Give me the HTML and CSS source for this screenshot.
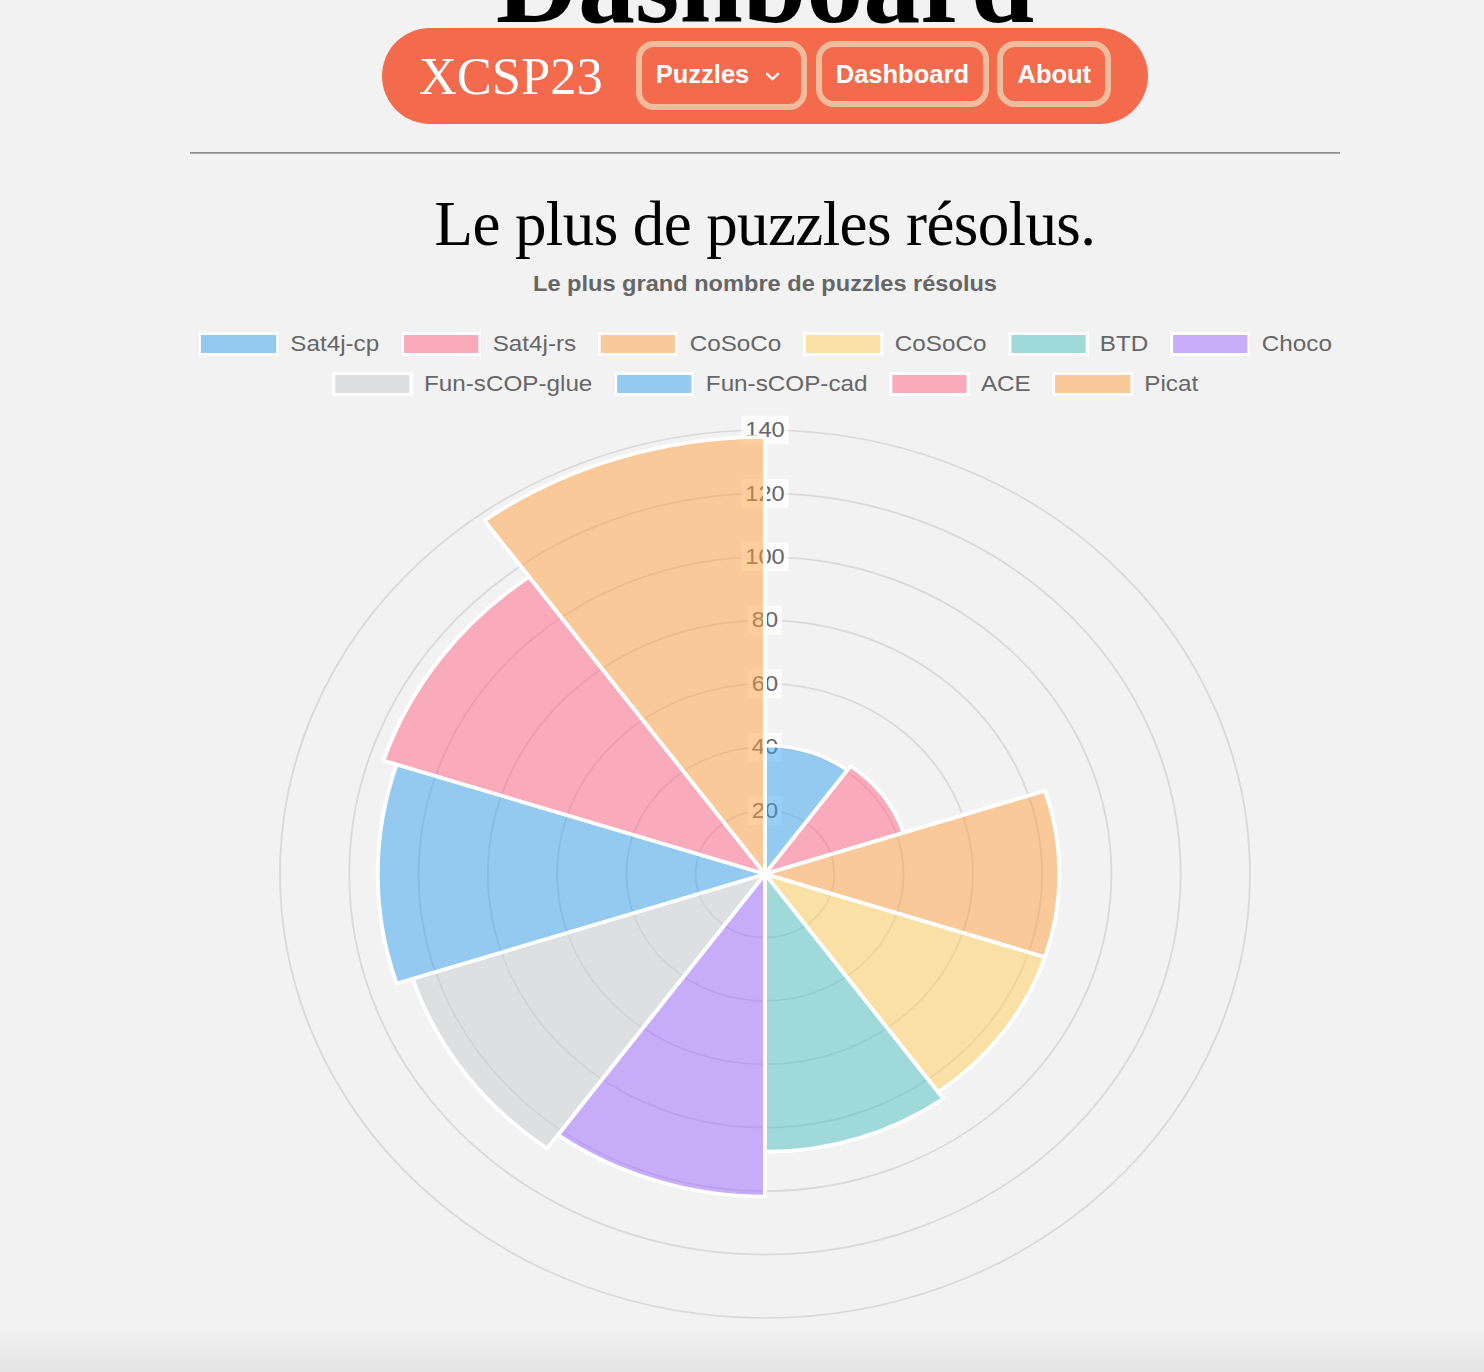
FILE: index.html
```html
<!DOCTYPE html>
<html lang="fr">
<head>
<meta charset="utf-8">
<title>Dashboard</title>
<link rel="stylesheet" href="styles.css">
</head>
<body>
<div class="page">
  <h1 class="site-title">Dashboard</h1>

  <nav class="topnav">
    <a class="brand" href="#">XCSP23</a>
    <ul class="nav-links">
      <li><a class="nav-btn nav-btn--dropdown" href="#">Puzzles <svg class="chev" viewBox="0 0 15 9" width="15" height="9"><polyline points="2,1.8 7.5,7.2 13,1.8"/></svg></a></li>
      <li><a class="nav-btn" href="#">Dashboard</a></li>
      <li><a class="nav-btn" href="#">About</a></li>
    </ul>
  </nav>

  <hr class="divider">

  <section class="chart-section">
    <h2 class="chart-heading">Le plus de puzzles résolus.</h2>

    <div class="chart-canvas">
      <div class="chart-title">Le plus grand nombre de puzzles résolus</div>

      <ul class="legend">
        <li class="legend-item"><span class="swatch c-blue"></span>Sat4j-cp</li>
        <li class="legend-item"><span class="swatch c-pink"></span>Sat4j-rs</li>
        <li class="legend-item"><span class="swatch c-orange"></span>CoSoCo</li>
        <li class="legend-item"><span class="swatch c-yellow"></span>CoSoCo</li>
        <li class="legend-item"><span class="swatch c-teal"></span>BTD</li>
        <li class="legend-item"><span class="swatch c-purple"></span>Choco</li>
        <li class="legend-item"><span class="swatch c-grey"></span>Fun-sCOP-glue</li>
        <li class="legend-item"><span class="swatch c-blue"></span>Fun-sCOP-cad</li>
        <li class="legend-item"><span class="swatch c-pink"></span>ACE</li>
        <li class="legend-item"><span class="swatch c-orange"></span>Picat</li>
      </ul>

      <svg class="polar" width="1052.8" height="925" viewBox="0 0 1052.8 925">
        <g class="grid">
          <circle cx="526.4" cy="474" r="63.43"/>
          <circle cx="526.4" cy="474" r="126.86"/>
          <circle cx="526.4" cy="474" r="190.29"/>
          <circle cx="526.4" cy="474" r="253.71"/>
          <circle cx="526.4" cy="474" r="317.14"/>
          <circle cx="526.4" cy="474" r="380.57"/>
          <circle cx="526.4" cy="474" r="444"/>
        </g>
        <g class="tick-bg">
          <rect x="510.8" y="396.17" width="31.2" height="28.8"/>
          <rect x="510.8" y="332.74" width="31.2" height="28.8"/>
          <rect x="510.8" y="269.31" width="31.2" height="28.8"/>
          <rect x="510.8" y="205.89" width="31.2" height="28.8"/>
          <rect x="504.8" y="142.46" width="43.2" height="28.8"/>
          <rect x="504.8" y="79.03" width="43.2" height="28.8"/>
          <rect x="504.8" y="15.6" width="43.2" height="28.8"/>
        </g>
        <g class="ticks">
          <text x="526.4" y="410.57">20</text>
          <text x="526.4" y="347.14">40</text>
          <text x="526.4" y="283.71">60</text>
          <text x="526.4" y="220.29">80</text>
          <text x="526.4" y="156.86">100</text>
          <text x="526.4" y="93.43">120</text>
          <text x="526.4" y="30">140</text>
        </g>
        <g class="slices">
          <path class="c-blue" d="M526.4,474 L526.4,345.56 A128.44,128.44 0 0 1 601.89,370.09 Z"/>
          <path class="c-pink" d="M526.4,474 L604.88,365.98 A133.52,133.52 0 0 1 653.39,432.74 Z"/>
          <path class="c-orange" d="M526.4,474 L782.78,390.70 A269.57,269.57 0 0 1 782.78,557.30 Z"/>
          <path class="c-yellow" d="M526.4,474 L782.78,557.30 A269.57,269.57 0 0 1 684.85,692.09 Z"/>
          <path class="c-teal" d="M526.4,474 L689.70,698.76 A277.82,277.82 0 0 1 526.4,751.82 Z"/>
          <path class="c-purple" d="M526.4,474 L526.4,796.53 A322.53,322.53 0 0 1 336.82,734.93 Z"/>
          <path class="c-grey" d="M526.4,474 L326.94,748.53 A339.34,339.34 0 0 1 203.67,578.86 Z"/>
          <path class="c-blue" d="M526.4,474 L189.18,583.57 A354.57,354.57 0 0 1 189.18,364.43 Z"/>
          <path class="c-pink" d="M526.4,474 L177.12,360.51 A367.25,367.25 0 0 1 310.54,176.89 Z"/>
          <path class="c-orange" d="M526.4,474 L269.52,120.44 A437.03,437.03 0 0 1 526.4,36.97 Z"/>
        </g>
      </svg>
    </div>
  </section>
</div>
<div class="bottom-shade"></div>
</body>
</html>
```

FILE: styles.css
```css
html, body {
  margin: 0;
  padding: 0;
}

body {
  background: #f2f2f2;
  font-family: "Liberation Sans", Arial, sans-serif;
  overflow: hidden;
}

.page {
  width: 1150px;
  margin-left: 190px;
}

.site-title {
  margin: -56.5px 0 0;
  font-family: "Liberation Serif", "Times New Roman", serif;
  font-weight: 700;
  font-size: 114px;
  line-height: 80px;
  text-align: center;
  color: #000;
}

/* ---------- navigation pill ---------- */
.topnav {
  display: flex;
  align-items: flex-start;
  width: fit-content;
  height: 96px;
  box-sizing: border-box;
  margin: 4.5px auto 0;
  padding: 0 37px;
  border-radius: 48px;
  background: #f36a4c;
}

.brand {
  align-self: center;
  margin-right: 33px;
  font-family: "Liberation Serif", "Times New Roman", serif;
  font-size: 52.5px;
  line-height: 50px;
  color: #fff;
  text-decoration: none;
}

.nav-links {
  display: flex;
  gap: 8.5px;
  margin: 13px 0 0;
  padding: 0;
  list-style: none;
}

.nav-btn {
  display: flex;
  align-items: center;
  padding: 12px 14px;
  border: 6px solid #f0bc9c;
  border-radius: 18px;
  font-family: "Liberation Sans", Arial, sans-serif;
  font-weight: 700;
  font-size: 25.5px;
  line-height: 30px;
  color: #fff;
  text-decoration: none;
}

.nav-btn--dropdown {
  padding: 12px 21px 15px 14px;
  gap: 16px;
}

.chev {
  margin-top: 5px;
}

.chev polyline {
  fill: none;
  stroke: #fff;
  stroke-width: 2.4;
  stroke-linecap: round;
  stroke-linejoin: round;
}

/* ---------- divider ---------- */
.divider {
  height: 0;
  margin: 28px 0 0;
  border: 0;
  border-top: 1px solid #8f8f8f;
  border-bottom: 1px solid #a8a8a8;
}

/* ---------- chart section ---------- */
.chart-heading {
  margin: 32px 0 0;
  font-family: "Liberation Serif", "Times New Roman", serif;
  font-weight: 400;
  font-size: 63px;
  line-height: 76px;
  letter-spacing: -0.6px;
  text-align: center;
  color: #000;
}

.chart-canvas {
  width: 1052.8px;
  margin-top: 9px;
  transform: scaleX(1.0923);
  transform-origin: 0 0;
}

.chart-title {
  font-weight: 700;
  font-size: 21.6px;
  line-height: 26px;
  text-align: center;
  color: #666;
}

.legend {
  display: flex;
  flex-wrap: wrap;
  justify-content: center;
  column-gap: 19.5px;
  row-gap: 14.8px;
  margin: 34px 0 0;
  padding: 0;
  list-style: none;
}

.legend-item {
  display: flex;
  align-items: center;
  gap: 10px;
  font-size: 22.2px;
  line-height: 25.2px;
  color: #666;
}

.swatch {
  width: 68.4px;
  height: 18px;
  border: 3.6px solid #fff;
}

.swatch.c-blue { background: rgba(54, 162, 235, 0.5); }
.swatch.c-pink { background: rgba(255, 99, 132, 0.5); }
.swatch.c-orange { background: rgba(255, 159, 64, 0.5); }
.swatch.c-yellow { background: rgba(255, 205, 86, 0.5); }
.swatch.c-teal { background: rgba(75, 192, 192, 0.5); }
.swatch.c-purple { background: rgba(153, 102, 255, 0.5); }
.swatch.c-grey { background: rgba(201, 203, 207, 0.5); }

.polar {
  display: block;
  margin-top: 3.8px;
}

.grid circle {
  fill: none;
  stroke: rgba(0, 0, 0, 0.1);
  stroke-width: 1.7;
}

.tick-bg rect {
  fill: rgba(255, 255, 255, 0.75);
}

.ticks text {
  font-family: "Liberation Sans", Arial, sans-serif;
  font-size: 21.6px;
  fill: #666;
  text-anchor: middle;
  dominant-baseline: central;
}

.slices path {
  stroke: #fff;
  stroke-width: 3.6;
  stroke-linejoin: bevel;
}

.slices .c-blue { fill: rgba(54, 162, 235, 0.5); }
.slices .c-pink { fill: rgba(255, 99, 132, 0.5); }
.slices .c-orange { fill: rgba(255, 159, 64, 0.5); }
.slices .c-yellow { fill: rgba(255, 205, 86, 0.5); }
.slices .c-teal { fill: rgba(75, 192, 192, 0.5); }
.slices .c-purple { fill: rgba(153, 102, 255, 0.5); }
.slices .c-grey { fill: rgba(201, 203, 207, 0.5); }

/* viewport bottom shading */
.bottom-shade {
  position: fixed;
  left: 0;
  right: 0;
  bottom: 0;
  height: 42px;
  background: linear-gradient(to bottom, rgba(0, 0, 0, 0), rgba(0, 0, 0, 0.055));
  pointer-events: none;
}
```
